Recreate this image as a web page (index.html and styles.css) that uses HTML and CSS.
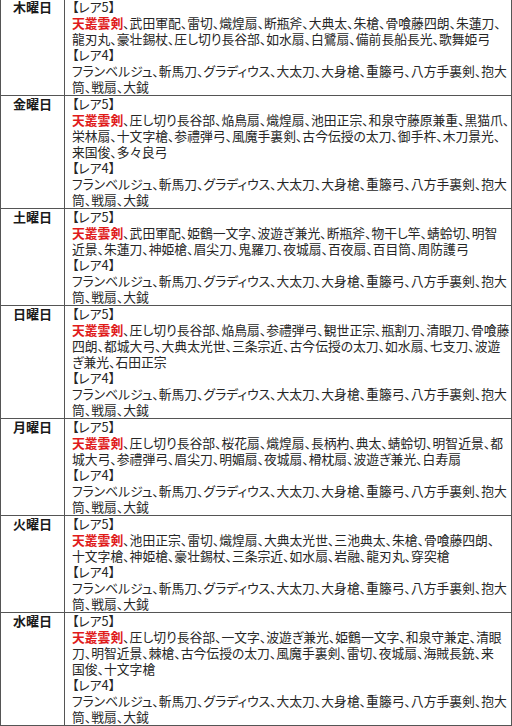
FILE: index.html
```html
<!DOCTYPE html>
<html lang="ja">
<head>
<meta charset="utf-8">
<link rel="stylesheet" href="styles.css">
</head>
<body>
<table class="sched">
<colgroup>
<col class="c-day">
<col class="c-list">
</colgroup>
<tbody>
<tr>
<th class="day">木曜日</th>
<td class="list">【レア5】<br><span class="hot">天叢雲剣</span>、武田軍配、雷切、熾煌扇、断瓶斧、大典太、朱槍、骨喰藤四朗、朱蓮刀、<br>龍刃丸、豪壮錫杖、圧し切り長谷部、如水扇、白鷺扇、備前長船長光、歌舞姫弓<br>【レア4】<br>フランベルジュ、斬馬刀、グラディウス、大太刀、大身槍、重籐弓、八方手裏剣、抱大<br>筒、戦扇、大鉞</td>
</tr>
<tr>
<th class="day">金曜日</th>
<td class="list">【レア5】<br><span class="hot">天叢雲剣</span>、圧し切り長谷部、焔鳥扇、熾煌扇、池田正宗、和泉守藤原兼重、黒猫爪、<br>栄林扇、十文字槍、参禮弾弓、風魔手裏剣、古今伝授の太刀、御手杵、木刀景光、<br>来国俊、多々良弓<br>【レア4】<br>フランベルジュ、斬馬刀、グラディウス、大太刀、大身槍、重籐弓、八方手裏剣、抱大<br>筒、戦扇、大鉞</td>
</tr>
<tr>
<th class="day">土曜日</th>
<td class="list">【レア5】<br><span class="hot">天叢雲剣</span>、武田軍配、姫鶴一文字、波遊ぎ兼光、断瓶斧、物干し竿、蜻蛉切、明智<br>近景、朱蓮刀、神姫槍、眉尖刀、鬼羅刀、夜城扇、百夜扇、百目筒、周防護弓<br>【レア4】<br>フランベルジュ、斬馬刀、グラディウス、大太刀、大身槍、重籐弓、八方手裏剣、抱大<br>筒、戦扇、大鉞</td>
</tr>
<tr>
<th class="day">日曜日</th>
<td class="list">【レア5】<br><span class="hot">天叢雲剣</span>、圧し切り長谷部、焔鳥扇、参禮弾弓、観世正宗、瓶割刀、清眼刀、骨喰藤<br>四朗、都城大弓、大典太光世、三条宗近、古今伝授の太刀、如水扇、七支刀、波遊<br>ぎ兼光、石田正宗<br>【レア4】<br>フランベルジュ、斬馬刀、グラディウス、大太刀、大身槍、重籐弓、八方手裏剣、抱大<br>筒、戦扇、大鉞</td>
</tr>
<tr>
<th class="day">月曜日</th>
<td class="list">【レア5】<br><span class="hot">天叢雲剣</span>、圧し切り長谷部、桜花扇、熾煌扇、長柄杓、典太、蜻蛉切、明智近景、都<br>城大弓、参禮弾弓、眉尖刀、明媚扇、夜城扇、榾枕扇、波遊ぎ兼光、白寿扇<br>【レア4】<br>フランベルジュ、斬馬刀、グラディウス、大太刀、大身槍、重籐弓、八方手裏剣、抱大<br>筒、戦扇、大鉞</td>
</tr>
<tr>
<th class="day">火曜日</th>
<td class="list">【レア5】<br><span class="hot">天叢雲剣</span>、池田正宗、雷切、熾煌扇、大典太光世、三池典太、朱槍、骨喰藤四朗、<br>十文字槍、神姫槍、豪壮錫杖、三条宗近、如水扇、岩融、龍刃丸、穿突槍<br>【レア4】<br>フランベルジュ、斬馬刀、グラディウス、大太刀、大身槍、重籐弓、八方手裏剣、抱大<br>筒、戦扇、大鉞</td>
</tr>
<tr>
<th class="day">水曜日</th>
<td class="list">【レア5】<br><span class="hot">天叢雲剣</span>、圧し切り長谷部、一文字、波遊ぎ兼光、姫鶴一文字、和泉守兼定、清眼<br>刀、明智近景、棘槍、古今伝授の太刀、風魔手裏剣、雷切、夜城扇、海賊長銃、来<br>国俊、十文字槍<br>【レア4】<br>フランベルジュ、斬馬刀、グラディウス、大太刀、大身槍、重籐弓、八方手裏剣、抱大<br>筒、戦扇、大鉞</td>
</tr>
</tbody>
</table>
</body>
</html>
```

FILE: styles.css
```css
html, body {
  margin: 0;
  padding: 0;
  background: #ffffff;
}

body {
  font-family: "Noto Sans CJK JP", "Noto Sans", sans-serif;
  color: #222222;
}

.sched {
  border-collapse: collapse;
  width: 511px;
  margin-top: -2px;
  table-layout: fixed;
}

.c-day {
  width: 64px;
}

.c-list {
  width: 447px;
}

.sched th,
.sched td {
  border: 1px solid #555555;
  padding: 0;
  vertical-align: top;
  font-size: 13px;
  line-height: 16px;
}

.sched .day {
  font-weight: 700;
  text-align: center;
  color: #1a1a1a;
}

.sched .list {
  padding-left: 7px;
  white-space: nowrap;
  overflow: hidden;
  font-feature-settings: "palt";
  font-size: 12.8px;
  font-weight: 400;
  color: #262626;
}

.hot {
  color: #e01b1b;
  font-weight: 700;
}
```
